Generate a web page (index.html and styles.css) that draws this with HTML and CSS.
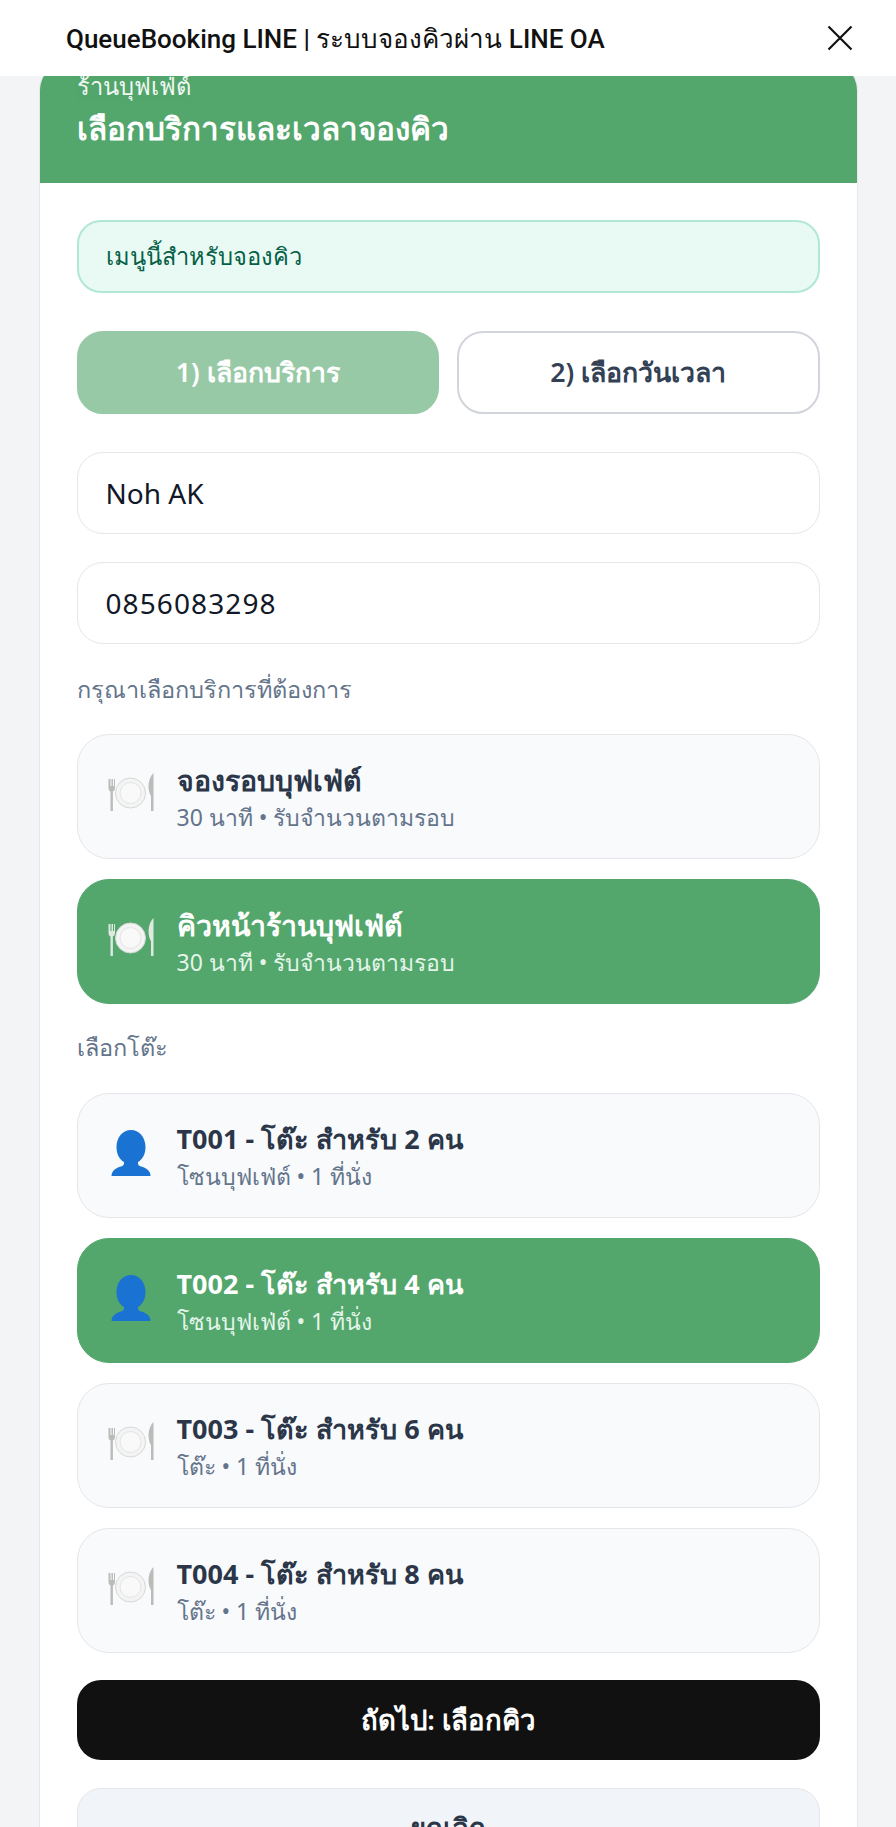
FILE: index.html
```html
<!DOCTYPE html>
<html lang="th">
<head>
<meta charset="utf-8">
<title>QueueBooking LINE</title>
<link rel="stylesheet" href="styles.css">
</head>
<body>
<svg class="defs" width="0" height="0" aria-hidden="true">
  <symbol id="plate" viewBox="0 0 48 48">
    <path class="cut" d="M1.500 11v9c0 2 .8 3 2 3.600V43h2.400V23.600C7 23 8 22 8 20v-9H7v7H6v-7H4.500v7h-1v-7z"/>
    <circle class="rim" cx="23.500" cy="25" r="15"/>
    <circle class="well" cx="23.500" cy="25" r="10.500"/>
    <path class="cut" d="M46.500 5c-3 3-5 8-5 13 0 4 1 8 2.500 10v15h2.500z"/>
  </symbol>
  <symbol id="person" viewBox="0 0 48 48">
    <path fill="#1a72d2" d="M24 1C16 1 9.500 8 9.500 18c0 7 3 12.500 7.500 15v1.500c0 1.500-1 2.200-3 3-5 1.500-9.500 4-9.500 9.500h39c0-5.500-4.500-8-9.500-9.500-2-.8-3-1.500-3-3V33c4.500-2.500 7.500-8 7.500-15C38.500 8 32 1 24 1z"/>
  </symbol>
</svg>
<div class="app">
  <header class="topbar">
    <h1 class="topbar-title">QueueBooking LINE | ระบบจองคิวผ่าน LINE OA</h1>
    <button class="close" type="button" aria-label="ปิด">
      <svg viewBox="0 0 26 26" width="26" height="26"><path d="M1.500 1.500l23 23M24.500 1.500l-23 23"/></svg>
    </button>
  </header>
  <main class="scroller">
    <section class="card">
      <div class="card-head">
        <div class="shop">ร้านบุฟเฟ่ต์</div>
        <h2 class="head-title">เลือกบริการและเวลาจองคิว</h2>
      </div>
      <div class="card-body">
        <div class="notice">เมนูนี้สำหรับจองคิว</div>
        <div class="tabs">
          <button class="tab tab-active" type="button">1) เลือกบริการ</button>
          <button class="tab" type="button">2) เลือกวันเวลา</button>
        </div>
        <input class="field" type="text" value="Noh AK">
        <input class="field field-phone" type="text" value="0856083298">
        <p class="label label-service">กรุณาเลือกบริการที่ต้องการ</p>
        <div class="options">
          <button class="option" type="button">
            <svg class="icon plate"><use href="#plate"/></svg>
            <span class="option-text"><span class="option-title title-wide">จองรอบบุฟเฟ่ต์</span><span class="option-sub">30 นาที • รับจำนวนตามรอบ</span></span>
          </button>
          <button class="option selected" type="button">
            <svg class="icon plate"><use href="#plate"/></svg>
            <span class="option-text"><span class="option-title title-wide">คิวหน้าร้านบุฟเฟ่ต์</span><span class="option-sub">30 นาที • รับจำนวนตามรอบ</span></span>
          </button>
        </div>
        <p class="label label-table">เลือกโต๊ะ</p>
        <div class="options">
          <button class="option" type="button">
            <svg class="icon"><use href="#person"/></svg>
            <span class="option-text"><span class="option-title">T001 - โต๊ะ สำหรับ 2 คน</span><span class="option-sub">โซนบุฟเฟ่ต์ • 1 ที่นั่ง</span></span>
          </button>
          <button class="option selected" type="button">
            <svg class="icon"><use href="#person"/></svg>
            <span class="option-text"><span class="option-title">T002 - โต๊ะ สำหรับ 4 คน</span><span class="option-sub">โซนบุฟเฟ่ต์ • 1 ที่นั่ง</span></span>
          </button>
          <button class="option" type="button">
            <svg class="icon plate"><use href="#plate"/></svg>
            <span class="option-text"><span class="option-title">T003 - โต๊ะ สำหรับ 6 คน</span><span class="option-sub">โต๊ะ • 1 ที่นั่ง</span></span>
          </button>
          <button class="option" type="button">
            <svg class="icon plate"><use href="#plate"/></svg>
            <span class="option-text"><span class="option-title">T004 - โต๊ะ สำหรับ 8 คน</span><span class="option-sub">โต๊ะ • 1 ที่นั่ง</span></span>
          </button>
        </div>
        <button class="btn btn-next" type="button">ถัดไป: เลือกคิว</button>
        <button class="btn btn-cancel" type="button">ยกเลิก</button>
      </div>
    </section>
  </main>
</div>
</body>
</html>
```
FILE: styles.css
```css
* { box-sizing: border-box; }
html, body { margin: 0; height: 100%; }
body {
  background: #f3f4f6;
  color: #111827;
  font-family: "Noto Sans", "Open Sans", "DejaVu Sans", sans-serif;
  overflow: hidden;
}
button, input { font: inherit; }
.defs { position: absolute; }
.app { display: flex; flex-direction: column; height: 1827px; overflow: hidden; }
.topbar {
  flex: 0 0 76px;
  display: flex;
  align-items: center;
  justify-content: space-between;
  padding: 0 43px 0 66px;
  background: #fff;
}
.topbar-title {
  margin: 0;
  font-family: Roboto, "Noto Sans", sans-serif;
  font-size: 26px;
  font-weight: 500;
  color: #111;
}
.close { border: 0; background: none; padding: 0; width: 26px; height: 26px; }
.close svg { display: block; }
.close path { fill: none; stroke: #111; stroke-width: 2.2; }
.scroller { flex: 1; overflow: hidden; padding: 0 38.500px; }
.card {
  margin-top: -14px;
  background: #fff;
  border: 1px solid #e5e7eb;
  border-radius: 28px 28px 0 0;
  overflow: hidden;
}
.card-head {
  height: 120px;
  padding: 8px 37px 0;
  background: #53a66c;
  color: #fff;
}
.shop { font-size: 23.700px; line-height: 30px; opacity: .92; }
.head-title { margin: 7px 0 0; font-size: 31.400px; line-height: 40px; font-weight: 600; }
.card-body { display: flex; flex-direction: column; padding: 37px 37px 0; }
.notice {
  height: 73px;
  display: flex;
  align-items: center;
  padding: 0 27px;
  background: #e8faf3;
  border: 2px solid #b0e8d3;
  border-radius: 24px;
  color: #065f46;
  font-size: 23.700px;
}
.tabs { display: grid; grid-template-columns: 1fr 1fr; gap: 18px; margin-top: 38px; }
.tab {
  height: 83px;
  background: #fff;
  border: 2px solid #d1d5db;
  border-radius: 26px;
  color: #334155;
  font-size: 26.700px;
  font-weight: 600;
}
.tab-active { background: #98c9a6; border-color: #98c9a6; color: #fff; }
.field {
  height: 82px;
  margin-top: 38px;
  padding: 0 28px;
  background: #fff;
  border: 1.500px solid #e4e6ea;
  border-radius: 26px;
  color: #111827;
  font-size: 28px;
  outline: none;
}
.field + .field { margin-top: 28px; }
.field-phone { letter-spacing: 1.100px; }
.label { margin: 0; color: #64748b; font-size: 23.500px; line-height: 32px; }
.label-service { margin-top: 29px; margin-bottom: 29px; }
.label-table { margin-top: 27px; margin-bottom: 30px; }
.options { display: flex; flex-direction: column; gap: 20px; }
.option {
  display: flex;
  align-items: center;
  gap: 22px;
  height: 125px;
  padding: 0 24px 0 29px;
  background: #f8fafc;
  border: 1.500px solid #e4e6ea;
  border-radius: 32px;
  text-align: left;
  color: #2b3648;
}
.option.selected { background: #53a66c; border-color: #53a66c; color: #fff; }
.icon { flex: 0 0 48px; width: 48px; height: 48px; margin-bottom: 6px; }
.icon.plate { margin-bottom: 9px; }
.option-text { display: flex; flex-direction: column; gap: 4px; padding-top: 2px; }
.option-title { font-size: 27px; line-height: 36px; font-weight: 700; }
.title-wide { font-size: 28.500px; }
.option-sub { font-size: 23px; line-height: 31px; color: #64748b; }
.selected .option-sub { color: #e3f5e9; }
.plate .cut, .plate { fill: #b9bcb9; }
.rim { fill: #f3f4f3; stroke: #d6d8d6; stroke-width: 1; }
.well { fill: #f8f9f8; stroke: #e3e5e3; stroke-width: 1; }
.selected .plate { fill: #dfe9e1; }
.selected .rim, .selected .well { fill: #f6f7f6; stroke: #f0f1f0; }
.btn {
  height: 80px;
  border-radius: 24px;
  font-size: 27.500px;
  font-weight: 600;
}
.btn-next { margin-top: 27px; border: 0; background: #111; color: #fff; }
.btn-cancel { margin-top: 28px; background: #f1f5f9; border: 1.500px solid #e4e6ea; color: #2b3648; }
```
